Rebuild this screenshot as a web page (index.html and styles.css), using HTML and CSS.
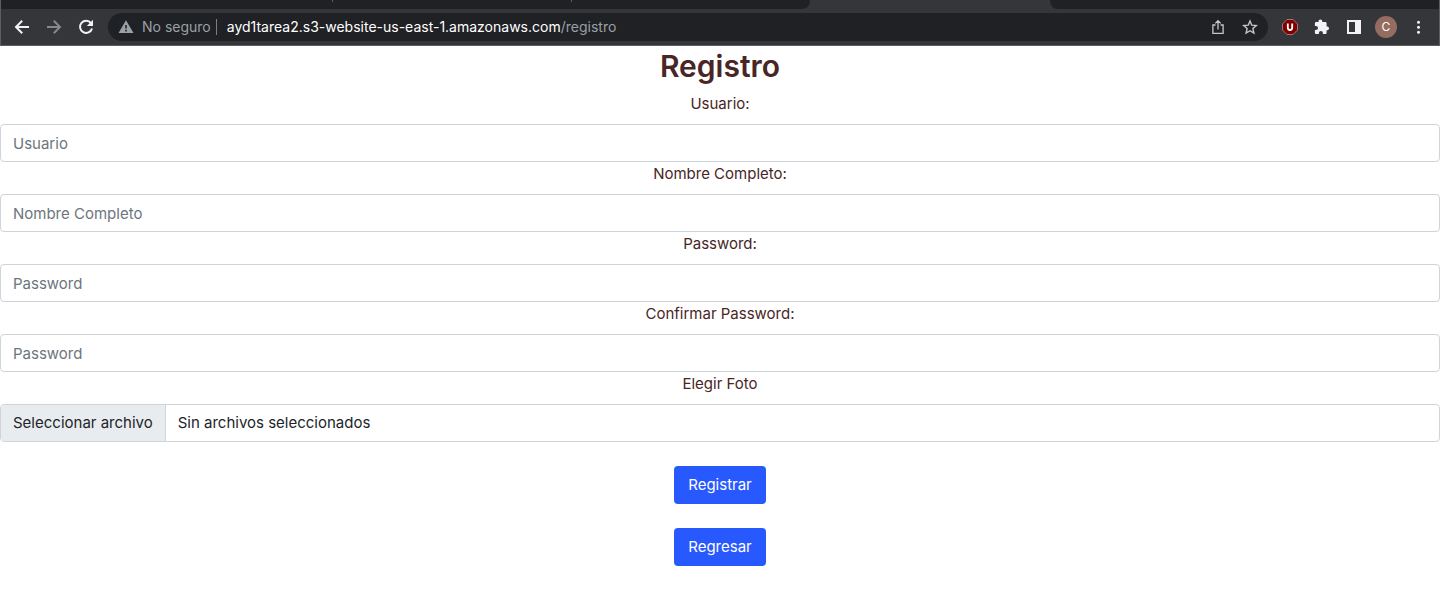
FILE: index.html
```html
<!DOCTYPE html>
<html lang="es">
<head>
<meta charset="utf-8">
<meta name="viewport" content="width=device-width, initial-scale=1">
<title>Registro</title>
<link rel="stylesheet" href="styles.css">
</head>
<body>
<header class="browser">
  <div class="tabs">
    <div class="tabs-left"><span class="tab tab-first"></span><span class="tab"></span></div>
    <div class="tab-active"></div>
    <div class="tabs-right"></div>
  </div>
  <div class="toolbar">
    <nav class="nav">
      <button class="icon-btn" type="button" aria-label="Atrás">
        <svg class="icon" viewBox="0 0 16 16"><path d="M15 8H2.5M8.2 1.8L2 8l6.200 6.200" fill="none" stroke="#f1f3f4" stroke-width="2"/></svg>
      </button>
      <button class="icon-btn" type="button" aria-label="Adelante">
        <svg class="icon" viewBox="0 0 16 16"><path d="M1 8h12.500M7.800 1.800L14 8l-6.200 6.200" fill="none" stroke="#87888b" stroke-width="2"/></svg>
      </button>
      <button class="icon-btn" type="button" aria-label="Recargar">
        <svg class="icon" viewBox="0 0 16 16"><path d="M13 4.100A6.100 6.100 0 1 0 14 9.400" fill="none" stroke="#f1f3f4" stroke-width="2"/><path d="M15 .8V7H8.800z" fill="#f1f3f4"/></svg>
      </button>
    </nav>
    <div class="address">
      <svg class="icon warn" viewBox="0 0 16 16"><path fill-rule="evenodd" d="M8 1.300L15.500 14H.5zM7.200 6v3.500h1.600V6zM7.200 10.800v1.600h1.600v-1.600z" fill="#9aa0a6"/></svg>
      <span class="insecure">No seguro</span>
      <span class="url"><span class="host">ayd1tarea2.s3-website-us-east-1.amazonaws.com</span>/registro</span>
      <span class="address-actions">
        <button class="icon-btn" type="button" aria-label="Compartir">
          <svg class="icon" viewBox="0 0 16 16"><path d="M5.500 6H2.900v8.300h10.200V6h-2.600M8 10.500V2M5.300 4.400L8 1.700l2.700 2.700" fill="none" stroke="#c4c7ca" stroke-width="1.300"/></svg>
        </button>
        <button class="icon-btn" type="button" aria-label="Favorito">
          <svg class="icon" viewBox="0 0 16 16"><path d="M8 2l1.800 4.200 4.500.4-3.400 3 1 4.400L8 11.700 4.100 14l1-4.400-3.400-3 4.500-.4z" fill="none" stroke="#c4c7ca" stroke-width="1.400"/></svg>
        </button>
      </span>
    </div>
    <div class="extensions">
      <button class="icon-btn" type="button" aria-label="uBlock">
        <svg class="icon" viewBox="0 0 16 16"><path d="M5 .5h6L15.500 5v6L11 15.500H5L.5 11V5z" fill="#800000" stroke="#b98a8c" stroke-width=".8"/><path d="M5.800 4.500v4.300a2.200 2.200 0 0 0 4.400 0V4.500" fill="none" stroke="#fff" stroke-width="1.800"/></svg>
      </button>
      <button class="icon-btn" type="button" aria-label="Extensiones">
        <svg class="icon" viewBox="0 0 16 16"><path d="M13.600 7.500h-1V4.300c0-.8-.6-1.400-1.400-1.400H8.300V2.300a1.900 1.900 0 0 0-3.800 0v.6H2.200C1.400 2.900.9 3.500.9 4.300v2.600h1a2.100 2.100 0 0 1 0 4.200h-1v2.600c0 .8.5 1.400 1.300 1.400h2.700v-1a2 2 0 0 1 4 0v1h2.300c.8 0 1.400-.6 1.400-1.400v-2.500h1a1.900 1.900 0 0 0 0-3.700z" fill="#f1f3f4"/></svg>
      </button>
      <button class="icon-btn" type="button" aria-label="Panel lateral">
        <svg class="icon" viewBox="0 0 16 16"><path fill-rule="evenodd" d="M1 1h14v14H1zM3 3v10h6V3z" fill="#f1f3f4"/></svg>
      </button>
      <button class="avatar" type="button" aria-label="Perfil">C</button>
      <button class="icon-btn" type="button" aria-label="Menú">
        <svg class="icon" viewBox="0 0 16 16"><g fill="#f1f3f4"><circle cx="8.500" cy="3.200" r="1.500"/><circle cx="8.500" cy="8.200" r="1.500"/><circle cx="8.500" cy="13.200" r="1.500"/></g></svg>
      </button>
    </div>
  </div>
</header>
<main class="page">
  <h1 class="title">Registro</h1>
  <form class="form">
    <label class="label" for="usuario">Usuario:</label>
    <input class="control" id="usuario" type="text" placeholder="Usuario">
    <label class="label" for="nombre">Nombre Completo:</label>
    <input class="control" id="nombre" type="text" placeholder="Nombre Completo">
    <label class="label" for="password">Password:</label>
    <input class="control" id="password" type="password" placeholder="Password">
    <label class="label" for="confirmar">Confirmar Password:</label>
    <input class="control" id="confirmar" type="password" placeholder="Password">
    <label class="label" for="foto">Elegir Foto</label>
    <input class="file-input" id="foto" type="file">
    <label class="file" for="foto">
      <span class="file-button">Seleccionar archivo</span>
      <span class="file-name">Sin archivos seleccionados</span>
    </label>
    <div class="actions">
      <button class="btn" type="submit">Registrar</button>
      <button class="btn" type="button">Regresar</button>
    </div>
  </form>
</main>
</body>
</html>
```
FILE: styles.css
```css
* {
  box-sizing: border-box;
}

body {
  margin: 0;
  background: #fff;
  color: #212529;
  font: 15px/24px Inter, Roboto, "Liberation Sans", sans-serif;
}

button,
input {
  font: inherit;
}

.browser {
  background: #35363a;
  border: 1px solid #5c5d60;
  border-top: 0;
}

.tabs {
  display: flex;
  height: 9px;
}

.tabs-left {
  display: flex;
  flex: 809;
  background: #202124;
  border-bottom-right-radius: 8px;
}

.tab {
  width: 239px;
  height: 2px;
  border-right: 1px solid #5f6063;
}

.tab-first {
  width: 332px;
}

.tab-active {
  flex: 240;
}

.tabs-right {
  flex: 389;
  background: #202124;
  border-bottom-left-radius: 8px;
}

.tabs-left,
.tab-active,
.tabs-right {
  min-width: 0;
}

.toolbar {
  display: flex;
  align-items: center;
  height: 36px;
  padding: 0 13px;
}

.nav,
.address-actions,
.extensions {
  display: flex;
  align-items: center;
  gap: 16px;
}

.icon-btn {
  display: block;
  width: 16px;
  height: 16px;
  padding: 0;
  border: 0;
  background: none;
}

.icon {
  display: block;
  flex: none;
  width: 16px;
  height: 16px;
}

.address {
  display: flex;
  flex: 1;
  align-items: center;
  min-width: 0;
  height: 28px;
  margin: 0 14px;
  padding: 0 10px;
  border-radius: 14px;
  background: #202124;
  color: #9aa0a6;
  font-size: 14px;
  line-height: 18px;
  white-space: nowrap;
}

.insecure {
  margin-left: 8px;
  padding-right: 5px;
  border-right: 1px solid #7b7f84;
  line-height: 16px;
}

.url {
  flex: 1;
  min-width: 0;
  margin-left: 10px;
  overflow: hidden;
}

.host {
  color: #fff;
}

.avatar {
  width: 22px;
  height: 22px;
  margin: 0 -3px;
  padding: 0;
  border: 0;
  border-radius: 50%;
  background: #946c60;
  color: #fff;
  font-size: 12px;
  line-height: 22px;
}

.title {
  margin: 0;
  padding: 1px 0 7px;
  color: #482626;
  font-size: 30px;
  font-weight: 600;
  line-height: 38px;
  text-align: center;
}

.form {
  display: flex;
  flex-direction: column;
}

.label {
  align-self: center;
  margin-bottom: 8px;
  color: #482626;
}

.control,
.file {
  width: 100%;
  height: 38px;
  border: 1px solid #ced4da;
  border-radius: 4px;
  background: #fff;
}

.control {
  padding: 6px 12px;
  color: #212529;
}

.control::placeholder {
  color: #6c757d;
  opacity: 1;
}

.file {
  display: flex;
  overflow: hidden;
}

.file-input {
  position: absolute;
  width: 1px;
  height: 1px;
  opacity: 0;
}

.file-button,
.file-name {
  padding: 6px 12px;
}

.file-button {
  border-right: 1px solid #ced4da;
  background: #e9ecef;
}

.actions {
  display: flex;
  flex-direction: column;
  align-items: center;
  gap: 24px;
  padding: 24px 0;
}

.btn {
  padding: 7px 14px;
  border: 0;
  border-radius: 4px;
  background: #2759ff;
  color: #fff;
}
```
